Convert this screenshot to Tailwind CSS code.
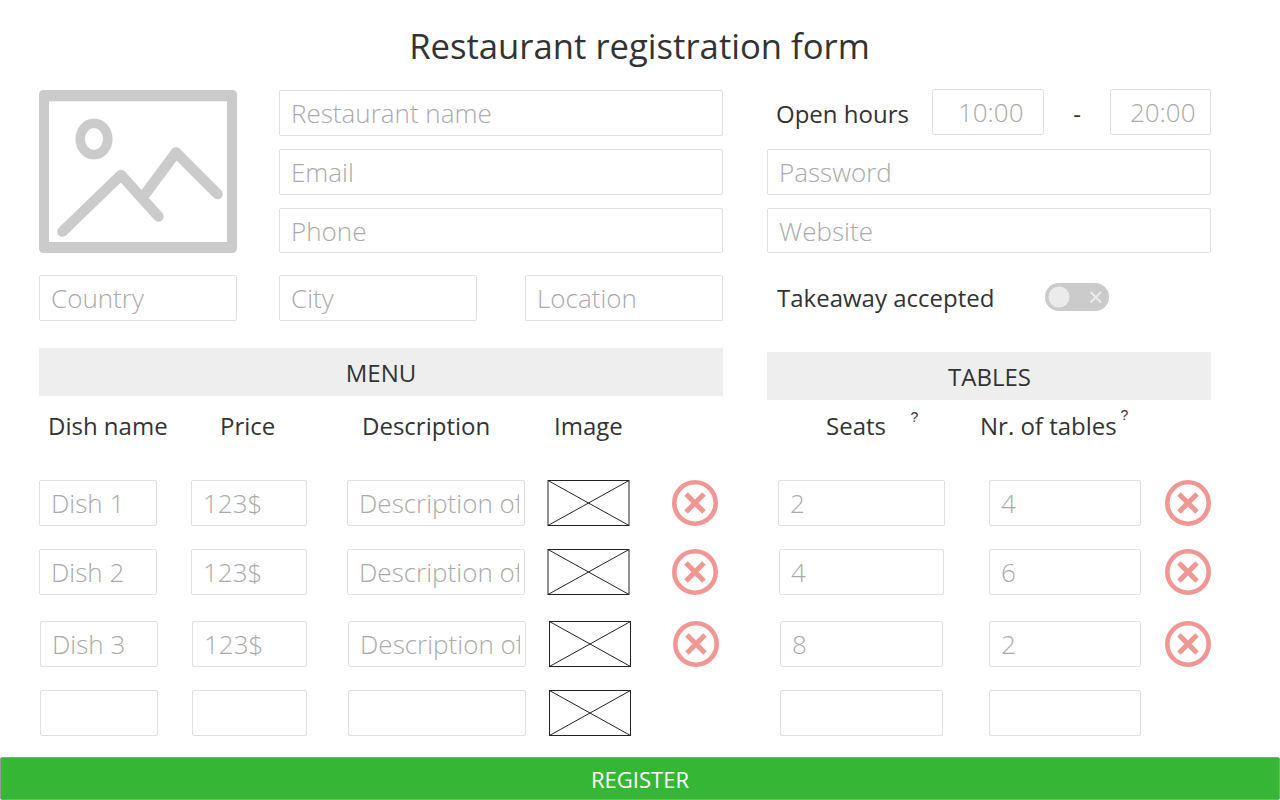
<!DOCTYPE html>
<html lang="en">
<head>
<meta charset="utf-8">
<title>Restaurant registration form</title>
<script src="https://cdn.jsdelivr.net/npm/@tailwindcss/browser@4"></script>
</head>
<body class="w-[1280px] h-[800px] overflow-hidden bg-white font-['Open_Sans',sans-serif] text-[#333]">
<svg class="hidden">
  <symbol id="remove" viewBox="0 0 46 46"><circle cx="23" cy="23" r="20.7" fill="none" stroke="#f09793" stroke-width="4.6"/><path d="M14 14 32 32M32 14 14 32" fill="none" stroke="#f09793" stroke-width="5"/></symbol>
  <symbol id="thumb" viewBox="0 0 83 46"><rect x="1" y=".5" width="81" height="45" fill="#fff" stroke="#222"/><path d="M1 .5 82 45.5M82 .5 1 45.5" stroke="#222" fill="none"/></symbol>
  <symbol id="thumb-narrow" viewBox="0 0 82 46"><rect x=".5" y=".5" width="81" height="45" fill="#fff" stroke="#222"/><path d="M.5.5 81.5 45.5M81.5.5.5 45.5" stroke="#222" fill="none"/></symbol>
</svg>
<form class="flex h-[800px] flex-col">
  <h1 class="h-[89px] pt-[21px] pr-px text-center text-[34.67px] leading-[50px]">Restaurant registration form</h1>
  <div class="flex h-[668px] pl-[39px]">
    <section class="w-[684px] pt-px">
      <div class="flex justify-between">
        <svg class="h-[163px] w-[198px]" viewBox="0 0 198 163" fill="none" stroke="#cbcbcb" stroke-width="10.5">
          <rect width="198" height="163" rx="4.5" fill="#cbcbcb" stroke="none"/><rect x="10" y="11.3" width="178" height="140.7" fill="#fff" stroke="none"/>
          <ellipse cx="55" cy="49" rx="13.8" ry="15.8" stroke-width="9.5"/>
          <path d="M23.500 141.500 82 85 119.500 126.500M104 107 137 62.500 178.500 104" stroke-linecap="round" stroke-linejoin="round"/>
        </svg>
        <div class="flex w-[444px] flex-col">
          <input placeholder="Restaurant name" class="h-[46px] rounded-[2px] border border-[#e0e0e0] pl-[11px] pr-1 text-[26px] font-light placeholder:text-[#aaa]">
          <input placeholder="Email" class="mt-[13px] h-[45.500px] rounded-[2px] border border-[#e0e0e0] pl-[11px] pr-1 text-[26px] font-light placeholder:text-[#aaa]">
          <input placeholder="Phone" class="mt-[13px] h-[45.500px] rounded-[2px] border border-[#e0e0e0] pl-[11px] pr-1 pt-px text-[26px] font-light placeholder:text-[#aaa]">
        </div>
      </div>
      <div class="mt-[22px] flex">
        <input placeholder="Country" class="h-[46px] w-[198px] rounded-[2px] border border-[#e0e0e0] pl-[11px] pr-1 text-[26px] font-light placeholder:text-[#aaa]">
        <input placeholder="City" class="ml-[42px] h-[46px] w-[198px] rounded-[2px] border border-[#e0e0e0] pl-[11px] pr-1 text-[26px] font-light placeholder:text-[#aaa]">
        <input placeholder="Location" class="ml-12 h-[46px] w-[198px] rounded-[2px] border border-[#e0e0e0] pl-[11px] pr-1 text-[26px] font-light placeholder:text-[#aaa]">
      </div>
      <h2 class="mt-[27px] h-12 bg-[#eee] text-center text-[24px] leading-[50px]">MENU</h2>
      <div class="mt-[6px] grid h-[78px] grid-cols-[172px_142px_192px_1fr] pl-[9px] text-[24px] leading-[48px]"><span>Dish name</span><span>Price</span><span>Description</span><span>Image</span></div>
      <div class="flex h-[69px]">
        <input placeholder="Dish 1" class="h-[46px] w-[118px] rounded-[2px] border border-[#e0e0e0] pl-[11px] pr-1 text-[26px] font-light placeholder:text-[#aaa]">
        <input placeholder="123$" class="ml-[34px] h-[46px] w-[116px] rounded-[2px] border border-[#e0e0e0] pl-[11px] pr-1 text-[26px] font-light placeholder:text-[#aaa]">
        <input placeholder="Description of dish" class="ml-10 h-[46px] w-[178px] rounded-[2px] border border-[#e0e0e0] pl-[11px] pr-[5px] text-[26px] font-light placeholder:text-[#aaa]">
        <svg class="ml-[22px] h-[46px] w-[83px]"><use href="#thumb"/></svg>
        <svg class="ml-[42px] h-[46px] w-[46px]"><use href="#remove"/></svg>
      </div>
      <div class="flex h-[72px]">
        <input placeholder="Dish 2" class="h-[46px] w-[118px] rounded-[2px] border border-[#e0e0e0] pl-[11px] pr-1 text-[26px] font-light placeholder:text-[#aaa]">
        <input placeholder="123$" class="ml-[34px] h-[46px] w-[116px] rounded-[2px] border border-[#e0e0e0] pl-[11px] pr-1 text-[26px] font-light placeholder:text-[#aaa]">
        <input placeholder="Description of dish" class="ml-10 h-[46px] w-[178px] rounded-[2px] border border-[#e0e0e0] pl-[11px] pr-[5px] text-[26px] font-light placeholder:text-[#aaa]">
        <svg class="ml-[22px] h-[46px] w-[83px]"><use href="#thumb"/></svg>
        <svg class="ml-[42px] h-[46px] w-[46px]"><use href="#remove"/></svg>
      </div>
      <div class="flex h-[69px] pl-px">
        <input placeholder="Dish 3" class="h-[46px] w-[118px] rounded-[2px] border border-[#e0e0e0] pl-[11px] pr-1 text-[26px] font-light placeholder:text-[#aaa]">
        <input placeholder="123$" class="ml-[34px] h-[46px] w-[115px] rounded-[2px] border border-[#e0e0e0] pl-[11px] pr-1 text-[26px] font-light placeholder:text-[#aaa]">
        <input placeholder="Description of dish" class="ml-[41px] h-[46px] w-[178px] rounded-[2px] border border-[#e0e0e0] pl-[11px] pr-[5px] text-[26px] font-light placeholder:text-[#aaa]">
        <svg class="ml-[23px] h-[46px] w-[82px]"><use href="#thumb-narrow"/></svg>
        <svg class="ml-[42px] h-[46px] w-[46px]"><use href="#remove"/></svg>
      </div>
      <div class="flex pl-px">
        <input aria-label="Dish name" class="h-[46px] w-[118px] rounded-[2px] border border-[#e0e0e0]">
        <input aria-label="Price" class="ml-[34px] h-[46px] w-[115px] rounded-[2px] border border-[#e0e0e0]">
        <input aria-label="Description" class="ml-[41px] h-[46px] w-[178px] rounded-[2px] border border-[#e0e0e0]">
        <svg class="ml-[23px] h-[46px] w-[82px]"><use href="#thumb-narrow"/></svg>
      </div>
    </section>
    <section class="ml-11 w-[444px]">
      <div class="flex pl-[9px]">
        <span class="w-[156px] text-[24px] leading-[50px]">Open hours</span>
        <input placeholder="10:00" class="h-[46px] w-[112px] rounded-[2px] border border-[#e0e0e0] pr-[19.500px] text-right text-[26px] font-light placeholder:text-[#aaa]">
        <span class="w-[66px] text-center text-[24px] leading-[50px]">-</span>
        <input placeholder="20:00" class="h-[46px] w-[101px] rounded-[2px] border border-[#e0e0e0] pr-[14.500px] text-right text-[26px] font-light placeholder:text-[#aaa]">
      </div>
      <div class="mt-[10px] flex flex-col">
        <input placeholder="Password" class="h-[45.500px] rounded-[2px] border border-[#e0e0e0] pl-[11px] pr-1 text-[26px] font-light placeholder:text-[#aaa]">
        <input placeholder="Website" class="mt-[13px] h-[45.500px] rounded-[2px] border border-[#e0e0e0] pl-[11px] pr-1 pt-px text-[26px] font-light placeholder:text-[#aaa]">
      </div>
      <div class="mt-[21px] flex h-[78px] pl-[10px] text-[24px] leading-[48px]">
        <span class="w-[268px]">Takeaway accepted</span>
        <svg class="mt-[9px] h-7 w-16" viewBox="0 0 64 28"><rect width="64" height="28" rx="14" fill="#cbcbcb"/><circle cx="14" cy="14" r="10.5" fill="#ebebeb"/><path d="M45.500 9 56 19.500M56 9 45.500 19.500" stroke="#ebebeb" stroke-width="2"/></svg>
      </div>
      <h2 class="h-12 bg-[#eee] pl-px text-center text-[24px] leading-[50px]">TABLES</h2>
      <div class="mt-[2px] flex h-[78px] pl-[59px] text-[24px] leading-[48px]">
        <span class="w-[84.500px]">Seats</span><span class="w-[69.500px] font-['Liberation_Sans'] text-[14px] leading-[30px]">?</span><span class="w-[140.500px]">Nr. of tables</span><span class="font-['Liberation_Sans'] text-[14px] leading-[26px]">?</span>
      </div>
      <div class="flex h-[69px] pl-[11px]">
        <input placeholder="2" class="h-[46px] w-[167px] rounded-[2px] border border-[#e0e0e0] pl-[11px] pr-1 text-[26px] font-light placeholder:text-[#aaa]">
        <input placeholder="4" class="ml-11 h-[46px] w-[152px] rounded-[2px] border border-[#e0e0e0] pl-[11px] pr-1 text-[26px] font-light placeholder:text-[#aaa]">
        <svg class="ml-6 h-[46px] w-[46px]"><use href="#remove"/></svg>
      </div>
      <div class="flex h-[72px] pl-3">
        <input placeholder="4" class="h-[46px] w-[165px] rounded-[2px] border border-[#e0e0e0] pl-[11px] pr-1 text-[26px] font-light placeholder:text-[#aaa]">
        <input placeholder="6" class="ml-[45px] h-[46px] w-[152px] rounded-[2px] border border-[#e0e0e0] pl-[11px] pr-1 text-[26px] font-light placeholder:text-[#aaa]">
        <svg class="ml-6 h-[46px] w-[46px]"><use href="#remove"/></svg>
      </div>
      <div class="flex h-[69px] pl-[13px]">
        <input placeholder="8" class="h-[46px] w-[163px] rounded-[2px] border border-[#e0e0e0] pl-[11px] pr-1 text-[26px] font-light placeholder:text-[#aaa]">
        <input placeholder="2" class="ml-[46px] h-[46px] w-[152px] rounded-[2px] border border-[#e0e0e0] pl-[11px] pr-1 text-[26px] font-light placeholder:text-[#aaa]">
        <svg class="ml-6 h-[46px] w-[46px]"><use href="#remove"/></svg>
      </div>
      <div class="flex pl-[13px]">
        <input aria-label="Seats" class="h-[46px] w-[163px] rounded-[2px] border border-[#e0e0e0]">
        <input aria-label="Nr. of tables" class="ml-[46px] h-[46px] w-[152px] rounded-[2px] border border-[#e0e0e0]">
      </div>
    </section>
  </div>
  <button type="button" class="h-[43px] w-full rounded-[2px] border border-[#999] bg-[#35b735] text-[22px] leading-[43px] text-white">REGISTER</button>
</form>
</body>
</html>
